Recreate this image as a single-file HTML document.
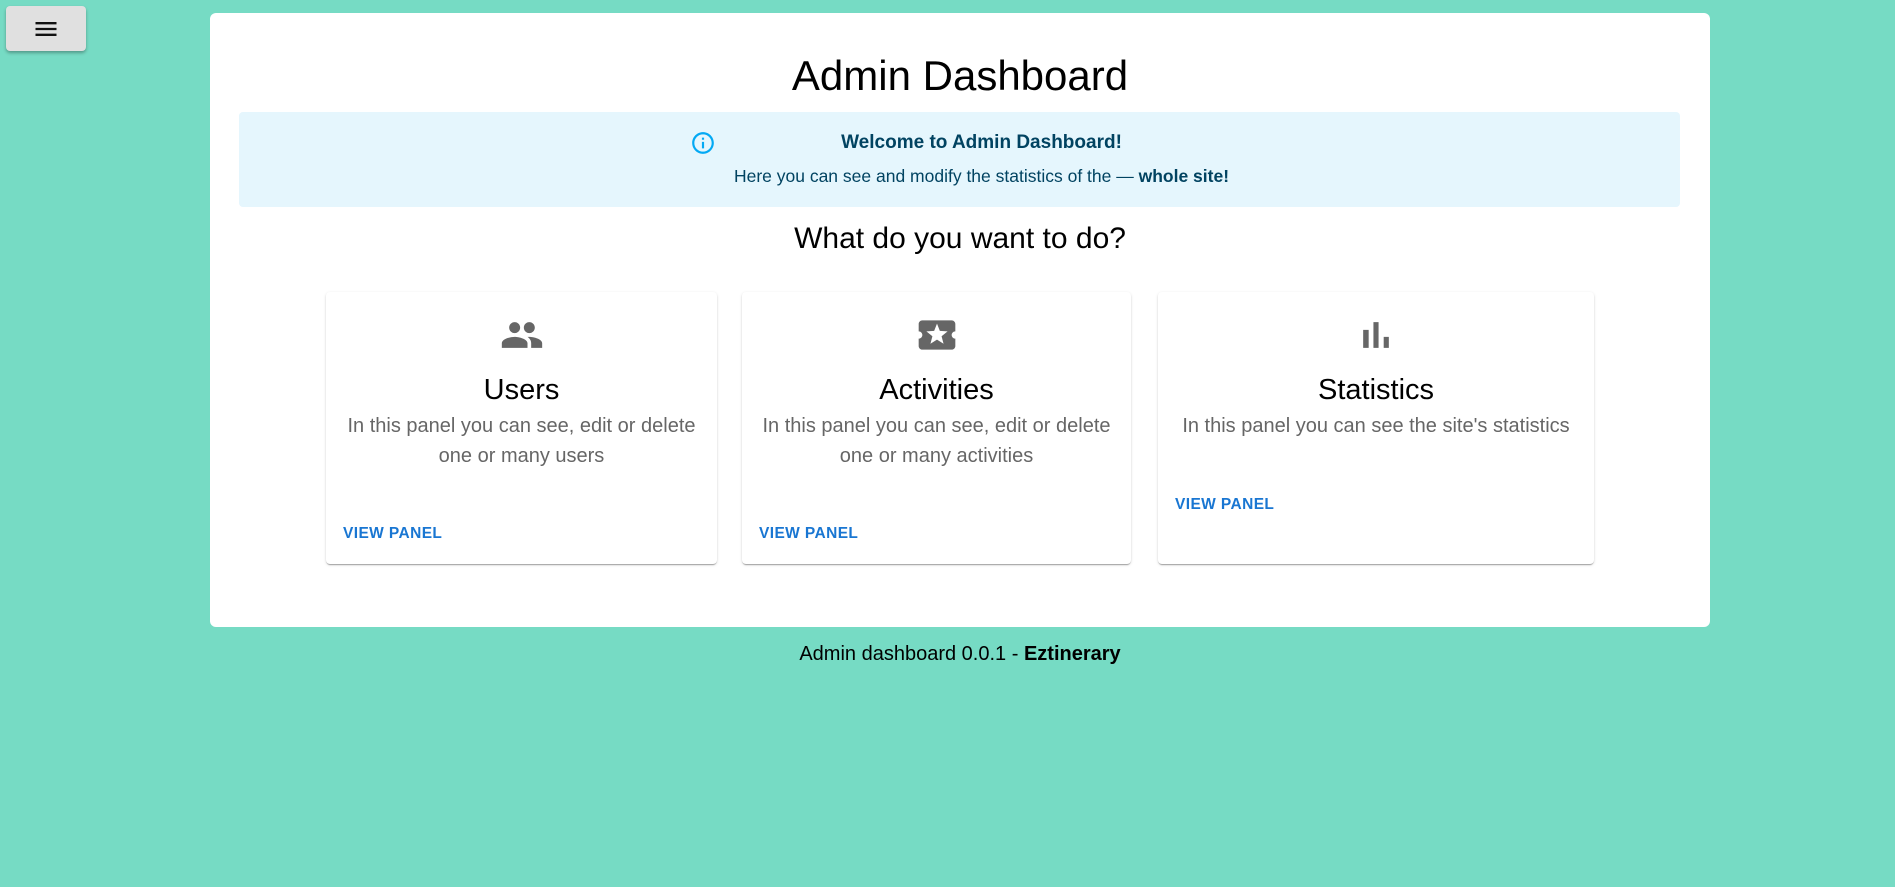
<!DOCTYPE html>
<html><head><meta charset="utf-8"><style>
*{box-sizing:border-box;margin:0;padding:0}
body{width:1895px;height:887px;background:#76dbc4;font-family:"Liberation Sans",sans-serif;position:relative;overflow:hidden}
.menu{position:absolute;left:6px;top:6px;width:80px;height:45px;background:#e0e0e0;border-radius:4px;box-shadow:0 2px 3px rgba(0,0,0,.3);display:flex;align-items:center;justify-content:center}
.main{position:absolute;left:210px;top:13px;width:1500px;height:614px;background:#fff;border-radius:6px}
h1{position:absolute;left:0;right:0;top:39px;text-align:center;font-weight:400;font-size:42px;color:#000}
.alert{position:absolute;left:29px;top:99px;width:1441px;height:95px;background:#e5f6fd;border-radius:4px;color:#014361}
.alert .t{position:absolute;left:0;right:0;top:20px;text-align:center;font-size:19px;padding-left:44px;font-weight:600}
.alert .b{position:absolute;left:0;right:0;top:54px;text-align:center;font-size:17.5px;padding-left:44px}
.alert svg{position:absolute;left:451px;top:18px}
h2{position:absolute;left:0;right:0;top:209px;text-align:center;font-weight:400;font-size:30px;color:#000}
.card{position:absolute;top:279px;height:272px;background:#fff;border-radius:4px;box-shadow:0 2px 1px -1px rgba(0,0,0,.2),0 1px 1px rgba(0,0,0,.14),0 1px 3px rgba(0,0,0,.12);text-align:center}
.card svg{position:absolute;left:50%;margin-left:-22px;top:21px}
.card .ti{position:absolute;left:0;right:0;top:82px;font-size:29px;color:#000}
.card .d{position:absolute;left:6px;right:6px;top:119px;font-size:20px;line-height:30px;color:#666}
.card .v{position:absolute;left:17px;font-size:15.5px;color:#1976d2;font-weight:600;letter-spacing:.4px}
.foot{position:absolute;left:0;width:1920px;top:643px;text-align:center;font-size:20px;color:#000}
</style></head><body>
<div class="menu"><svg width="28" height="28" viewBox="0 0 24 24"><path d="M3 18h18v-2H3v2zm0-5h18v-2H3v2zm0-7v2h18V6H3z" fill="#111"/></svg></div>
<div class="main">
<h1>Admin Dashboard</h1>
<div class="alert">
<svg width="26" height="26" viewBox="0 0 24 24"><path fill="#03a9f4" d="M11 7h2v2h-2zm0 4h2v6h-2zm1-9C6.48 2 2 6.48 2 12s4.48 10 10 10 10-4.48 10-10S17.52 2 12 2zm0 18c-4.41 0-8-3.59-8-8s3.59-8 8-8 8 3.59 8 8-3.59 8-8 8z"/></svg>
<div class="t">Welcome to Admin Dashboard!</div>
<div class="b">Here you can see and modify the statistics of the — <b>whole site!</b></div>
</div>
<h2>What do you want to do?</h2>
<div class="card" style="left:116px;width:391px">
<svg width="44" height="44" viewBox="0 0 24 24"><path fill="#666" d="M16 11c1.66 0 2.99-1.34 2.99-3S17.66 5 16 5c-1.66 0-3 1.34-3 3s1.34 3 3 3zm-8 0c1.66 0 2.99-1.34 2.99-3S9.66 5 8 5C6.34 5 5 6.34 5 8s1.34 3 3 3zm0 2c-2.33 0-7 1.17-7 3.5V19h14v-2.5c0-2.33-4.67-3.5-7-3.5zm8 0c-.29 0-.62.02-.97.05 1.16.84 1.97 1.97 1.97 3.45V19h6v-2.5c0-2.33-4.67-3.5-7-3.5z"/></svg>
<div class="ti">Users</div>
<div class="d">In this panel you can see, edit or delete<br>one or many users</div>
<div class="v" style="top:233px">VIEW PANEL</div>
</div>
<div class="card" style="left:532px;width:389px">
<svg width="44" height="44" viewBox="0 0 24 24"><path fill="#666" d="M20 12c0-1.1.9-2 2-2V6c0-1.1-.9-2-2-2H4c-1.1 0-1.99.9-1.99 2v4c1.1 0 1.99.9 1.99 2s-.89 2-2 2v4c0 1.1.9 2 2 2h16c1.1 0 2-.9 2-2v-4c-1.1 0-2-.9-2-2zm-4.42 4.8L12 14.5l-3.58 2.3 1.08-4.12-3.29-2.69 4.24-.25L12 5.8l1.54 3.95 4.24.25-3.29 2.69 1.09 4.11z"/></svg>
<div class="ti">Activities</div>
<div class="d">In this panel you can see, edit or delete<br>one or many activities</div>
<div class="v" style="top:233px">VIEW PANEL</div>
</div>
<div class="card" style="left:948px;width:436px">
<svg width="44" height="44" viewBox="0 0 24 24"><path fill="#666" d="M5 9.2h3V19H5zM10.6 5h2.8v14h-2.8zm5.6 8H19v6h-2.8z"/></svg>
<div class="ti">Statistics</div>
<div class="d">In this panel you can see the site's statistics</div>
<div class="v" style="top:204px">VIEW PANEL</div>
</div>
</div>
<div class="foot">Admin dashboard 0.0.1 - <b>Eztinerary</b></div>
</body></html>
